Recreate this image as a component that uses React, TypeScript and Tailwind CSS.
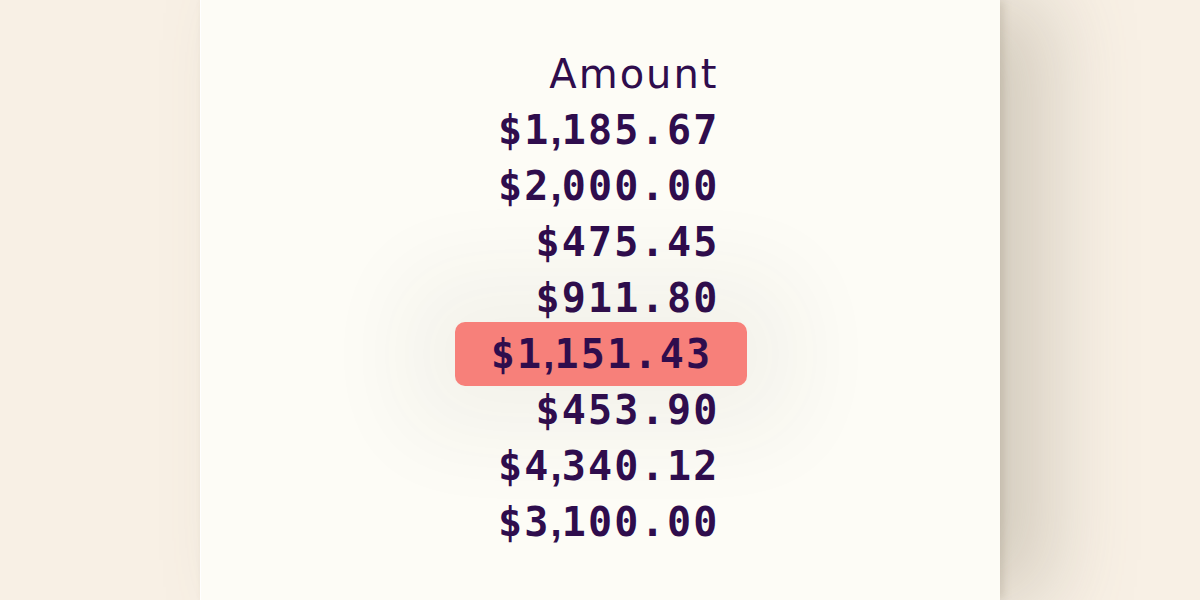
import React from "react";

const rows = ["$1,185.67", "$2,000.00", "$475.45", "$911.80", "$1,151.43", "$453.90", "$4,340.12", "$3,100.00"];

function Num({ v }: { v: string }) {
  return (
    <span className="tracking-[2.2px]">
      {v.split("").map((c, i) =>
        c === "," ? (
          <span key={i} className="tracking-[0px]" style={{ fontFamily: "'Liberation Sans', sans-serif" }}>,</span>
        ) : (
          <span key={i}>{c}</span>
        )
      )}
    </span>
  );
}

export default function App() {
  return (
    <div className="w-[1200px] h-[600px] bg-[#f8f0e5] flex justify-center overflow-hidden">
      <div className="relative w-[800px] h-full bg-[#fdfcf6] shadow-[4px_0_8px_rgba(110,100,80,0.18),50px_0_80px_rgba(120,110,90,0.28)] border-l border-[#ffffff]">
        <div className="flex flex-col items-center pt-[46px]">
          <div className="w-[292px] flex flex-col">
            <div className="h-[56px] flex items-center justify-end pr-[28px] text-[40px] leading-none text-[#2f0d4d] tracking-[2px]" style={{ fontFamily: "'DejaVu Sans', sans-serif" }}>
              Amount
            </div>
            {rows.map((r, i) =>
              i === 4 ? (
                <div key={i} className="my-[-4px] h-[64px] rounded-[10px] bg-[#f7807a] flex items-center justify-center pl-[2px] text-[40px] font-bold leading-none text-[#2f0d4d] shadow-[0_0_90px_50px_rgba(60,50,40,0.05)]" style={{ fontFamily: "'DejaVu Sans Mono', monospace" }}>
                  <Num v={r} />
                </div>
              ) : (
                <div key={i} className="h-[56px] flex items-center justify-end pr-[27px] text-[40px] font-bold leading-none text-[#2f0d4d]" style={{ fontFamily: "'DejaVu Sans Mono', monospace" }}>
                  <Num v={r} />
                </div>
              )
            )}
          </div>
        </div>
      </div>
    </div>
  );
}
